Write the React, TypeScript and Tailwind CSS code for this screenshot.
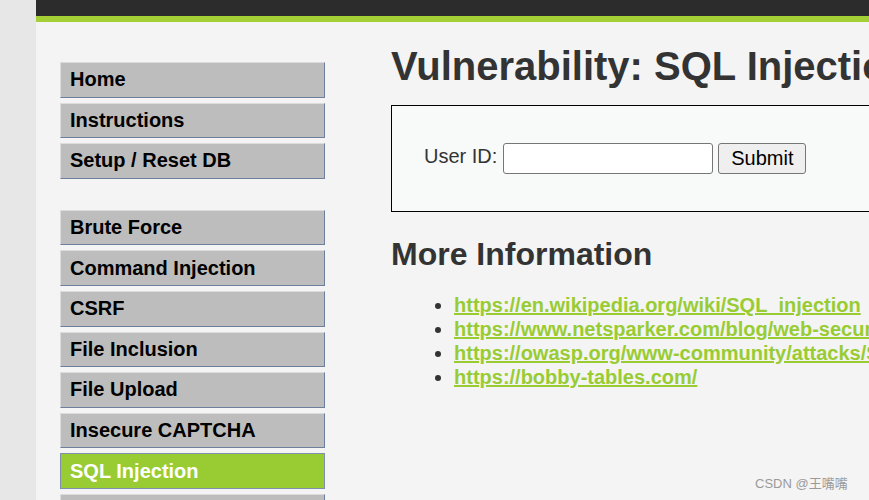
const MENU_TOP = ["Home", "Instructions", "Setup / Reset DB"];
const MENU_VULNS = [
  "Brute Force",
  "Command Injection",
  "CSRF",
  "File Inclusion",
  "File Upload",
  "Insecure CAPTCHA",
  "SQL Injection",
  "SQL Injection (Blind)",
];

const LINKS = [
  "https://en.wikipedia.org/wiki/SQL_injection",
  "https://www.netsparker.com/blog/web-security/sql-injection-cheat-sheet/",
  "https://owasp.org/www-community/attacks/SQL_Injection",
  "https://bobby-tables.com/",
];

function MenuItem({ label, active }: { label: string; active?: boolean }) {
  return (
    <li
      className={
        active
          ? "h-[35.6px] mb-[5px] flex items-center pl-[9px] border border-[#7d90ad] bg-[#99cc33] text-white font-bold text-[20px]"
          : "h-[35.6px] mb-[5px] flex items-center pl-[9px] border border-t-[#dcdcdc] border-l-[#dcdcdc] border-r-[#6c7f9c] border-b-[#6c7f9c] bg-[#bdbdbd] text-black font-bold text-[20px]"
      }
    >
      <span className="whitespace-nowrap leading-[23px]">{label}</span>
    </li>
  );
}

export default function App() {
  return (
    <div
      className="w-[869px] h-[500px] overflow-hidden flex bg-[#e7e7e7] relative"
      style={{ fontFamily: '"Liberation Sans", Arial, sans-serif' }}
    >
      {/* left gutter */}
      <div className="w-[36px] shrink-0 bg-[#e7e7e7]" />

      <div className="flex-1 min-w-0 flex flex-col bg-[#f4f4f4]">
        <div className="h-[16px] bg-[#2c2c2c] shrink-0" />
        <div className="h-[6px] bg-[#a4cf35] shrink-0" />

        <div className="flex">
          {/* menu */}
          <div className="ml-[24px] mt-[40px] w-[265px] shrink-0">
            <ul>
              {MENU_TOP.map((m) => (
                <MenuItem key={m} label={m} />
              ))}
            </ul>
            <ul className="mt-[31px]">
              {MENU_VULNS.map((m) => (
                <MenuItem key={m} label={m} active={m === "SQL Injection"} />
              ))}
            </ul>
          </div>

          {/* body */}
          <div className="ml-[66px] w-[700px] shrink-0 text-[#333]">
            <h1 className="mt-[20px] text-[40px] leading-[48px] font-bold whitespace-nowrap">
              Vulnerability: SQL Injection
            </h1>

            <div className="mt-[15px] h-[107px] border border-black bg-[#f8f9f9] flex items-center pl-[32px]">
              <span className="text-[20px] leading-[23px] mb-[4px]">User ID:</span>
              <input
                type="text"
                className="ml-[6px] w-[210px] h-[31px] bg-white border border-[#767676] rounded-[3px]"
              />
              <button
                type="button"
                className="ml-[5px] w-[88px] h-[31px] bg-[#efefef] border border-[#767676] rounded-[3px] text-[20px] text-black leading-[23px]"
              >
                Submit
              </button>
            </div>

            <h2 className="mt-[23px] text-[32px] leading-[38px] font-bold whitespace-nowrap">
              More Information
            </h2>

            <ul className="mt-[20px] list-disc pl-[63px]">
              {LINKS.map((l) => (
                <li key={l} className="text-[20px] leading-[24px] whitespace-nowrap">
                  <a href="#" className="font-bold text-[#99cc33] underline">
                    {l}
                  </a>
                </li>
              ))}
            </ul>
          </div>
        </div>
      </div>

      {/* watermark */}
      <div
        className="absolute left-[755px] top-[474px] text-[13px] text-[#9a9a9a] whitespace-nowrap"
        style={{ fontFamily: '"Liberation Sans", "Noto Sans CJK SC", sans-serif' }}
      >
        CSDN @王嘴嘴
      </div>
    </div>
  );
}
